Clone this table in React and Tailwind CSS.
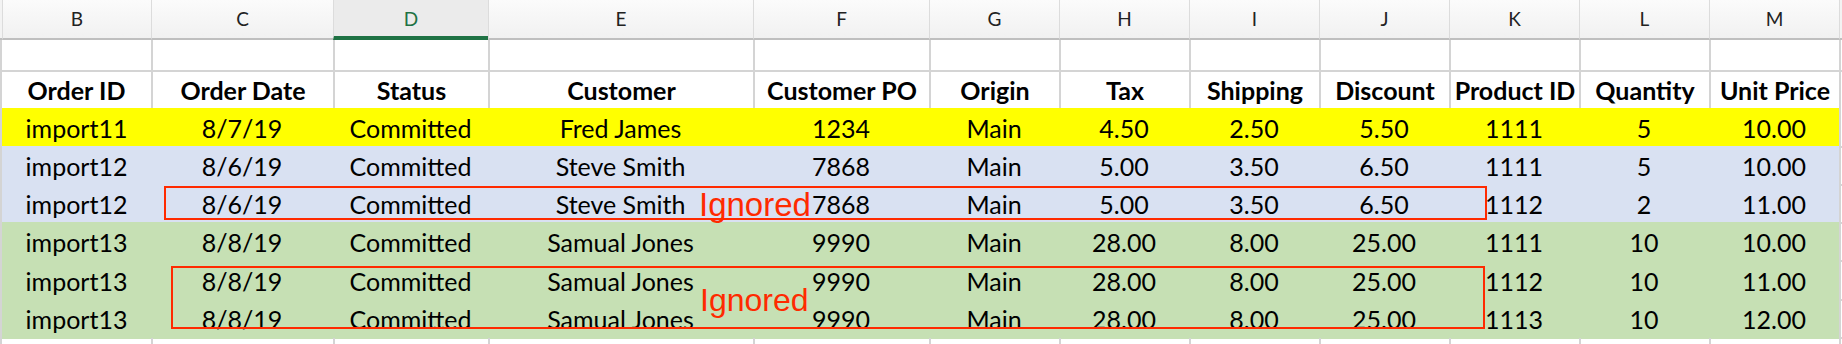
import React from 'react';

const letters = ['B', 'C', 'D', 'E', 'F', 'G', 'H', 'I', 'J', 'K', 'L', 'M'];

const headers = [
  'Order ID', 'Order Date', 'Status', 'Customer', 'Customer PO', 'Origin',
  'Tax', 'Shipping', 'Discount', 'Product ID', 'Quantity', 'Unit Price',
];

const rows = [
  { bg: 'bg-[#ffff00]', h: 'h-[38px]', cells: ['import11', '8/7/19', 'Committed', 'Fred James', '1234', 'Main', '4.50', '2.50', '5.50', '1111', '5', '10.00'] },
  { bg: 'bg-[#d9e1f2]', h: 'h-[38px]', cells: ['import12', '8/6/19', 'Committed', 'Steve Smith', '7868', 'Main', '5.00', '3.50', '6.50', '1111', '5', '10.00'] },
  { bg: 'bg-[#d9e1f2]', h: 'h-[38px]', cells: ['import12', '8/6/19', 'Committed', 'Steve Smith', '7868', 'Main', '5.00', '3.50', '6.50', '1112', '2', '11.00'] },
  { bg: 'bg-[#c6e0b4]', h: 'h-[39px]', cells: ['import13', '8/8/19', 'Committed', 'Samual Jones', '9990', 'Main', '28.00', '8.00', '25.00', '1111', '10', '10.00'] },
  { bg: 'bg-[#c6e0b4]', h: 'h-[38px]', cells: ['import13', '8/8/19', 'Committed', 'Samual Jones', '9990', 'Main', '28.00', '8.00', '25.00', '1112', '10', '11.00'] },
  { bg: 'bg-[#c6e0b4]', h: 'h-[39px]', cells: ['import13', '8/8/19', 'Committed', 'Samual Jones', '9990', 'Main', '28.00', '8.00', '25.00', '1113', '10', '12.00'] },
];

// widths of the sheet columns: sliver of A, B..M, sliver of N
const grid = 'grid grid-cols-[2px_149px_182px_155px_265px_176px_130px_130px_130px_130px_130px_130px_130px_3px]';

const App = () => {
  return (
    <div className="relative w-[1842px] h-[344px] overflow-hidden bg-white font-[Lato,sans-serif] text-black">
      {/* Column letters */}
      <div className={`${grid} h-[40px]`}>
        <div className="bg-[#f3f3f3] border-b-2 border-[#bfbfbf]" />
        {letters.map((l) =>
          l === 'D' ? (
            <div
              key={l}
              className="flex items-center justify-center bg-[#ebebeb] border-b-4 border-[#1f7244] border-l border-l-[#dcdcdc] text-[19px] text-[#1f7244] pt-[2px]"
            >
              {l}
            </div>
          ) : (
            <div
              key={l}
              className="flex items-center justify-center bg-linear-to-b from-[#fbfbfb] to-[#f1f1f1] border-b-2 border-[#bfbfbf] border-l border-l-[#dcdcdc] text-[19px] text-[#222]"
            >
              {l}
            </div>
          )
        )}
        <div className="bg-[#f3f3f3] border-b-2 border-[#bfbfbf] border-l border-l-[#dcdcdc]" />
      </div>

      {/* Empty row 1 */}
      <div className={`${grid} h-[32px]`}>
        <div className="bg-[#d4d4d4]" />
        {letters.map((l, i) => (
          <div key={l} className={`border-b-2 border-[#d4d4d4] ${i > 0 ? 'border-l-2' : ''}`} />
        ))}
        <div className="border-l-2 border-b-2 border-[#d4d4d4]" />
      </div>

      {/* Header row */}
      <div className={`${grid} h-[36px]`}>
        <div className="bg-[#d4d4d4]" />
        {headers.map((t, i) => (
          <div
            key={t}
            className={`flex items-center justify-center font-bold text-[25px] whitespace-nowrap border-[#d4d4d4] ${i > 0 ? 'border-l-2' : ''}`}
          >
            {t}
          </div>
        ))}
        <div className="border-l-2 border-[#d4d4d4]" />
      </div>

      {/* Data rows */}
      {rows.map((r, ri) => (
        <div key={ri} className={`${grid} ${r.h}`}>
          <div className="bg-[#d4d4d4]" />
          {r.cells.map((c, ci) => (
            <div
              key={ci}
              className={`flex items-center justify-center pt-[2px] text-[25px] whitespace-nowrap ${r.bg}`}
            >
              {c}
            </div>
          ))}
          <div className="border-l-2 border-b-2 border-[#d4d4d4]" />
        </div>
      ))}

      {/* Bottom partial row */}
      <div className={`${grid} h-[6px]`}>
        <div className="bg-[#d4d4d4]" />
        {letters.map((l, i) => (
          <div key={l} className={`border-[#d4d4d4] ${i > 0 ? 'border-l-2' : ''}`} />
        ))}
        <div className="border-l-2 border-[#d4d4d4]" />
      </div>

      {/* Annotations */}
      <div className="absolute left-[164px] top-[186px] w-[1323px] h-[34px] border-2 border-[#ff2a00]" />
      <div className="absolute left-[171px] top-[266px] w-[1314px] h-[63px] border-2 border-[#ff2a00]" />
      <div className="absolute left-[699px] top-[188px] font-['Liberation_Sans',Arial,sans-serif] text-[33px] leading-none text-[#ff2a00]">
        Ignored
      </div>
      <div className="absolute left-[700px] top-[284px] font-['Liberation_Sans',Arial,sans-serif] text-[32px] leading-none text-[#ff2a00]">
        Ignored
      </div>
    </div>
  );
};

export default App;
